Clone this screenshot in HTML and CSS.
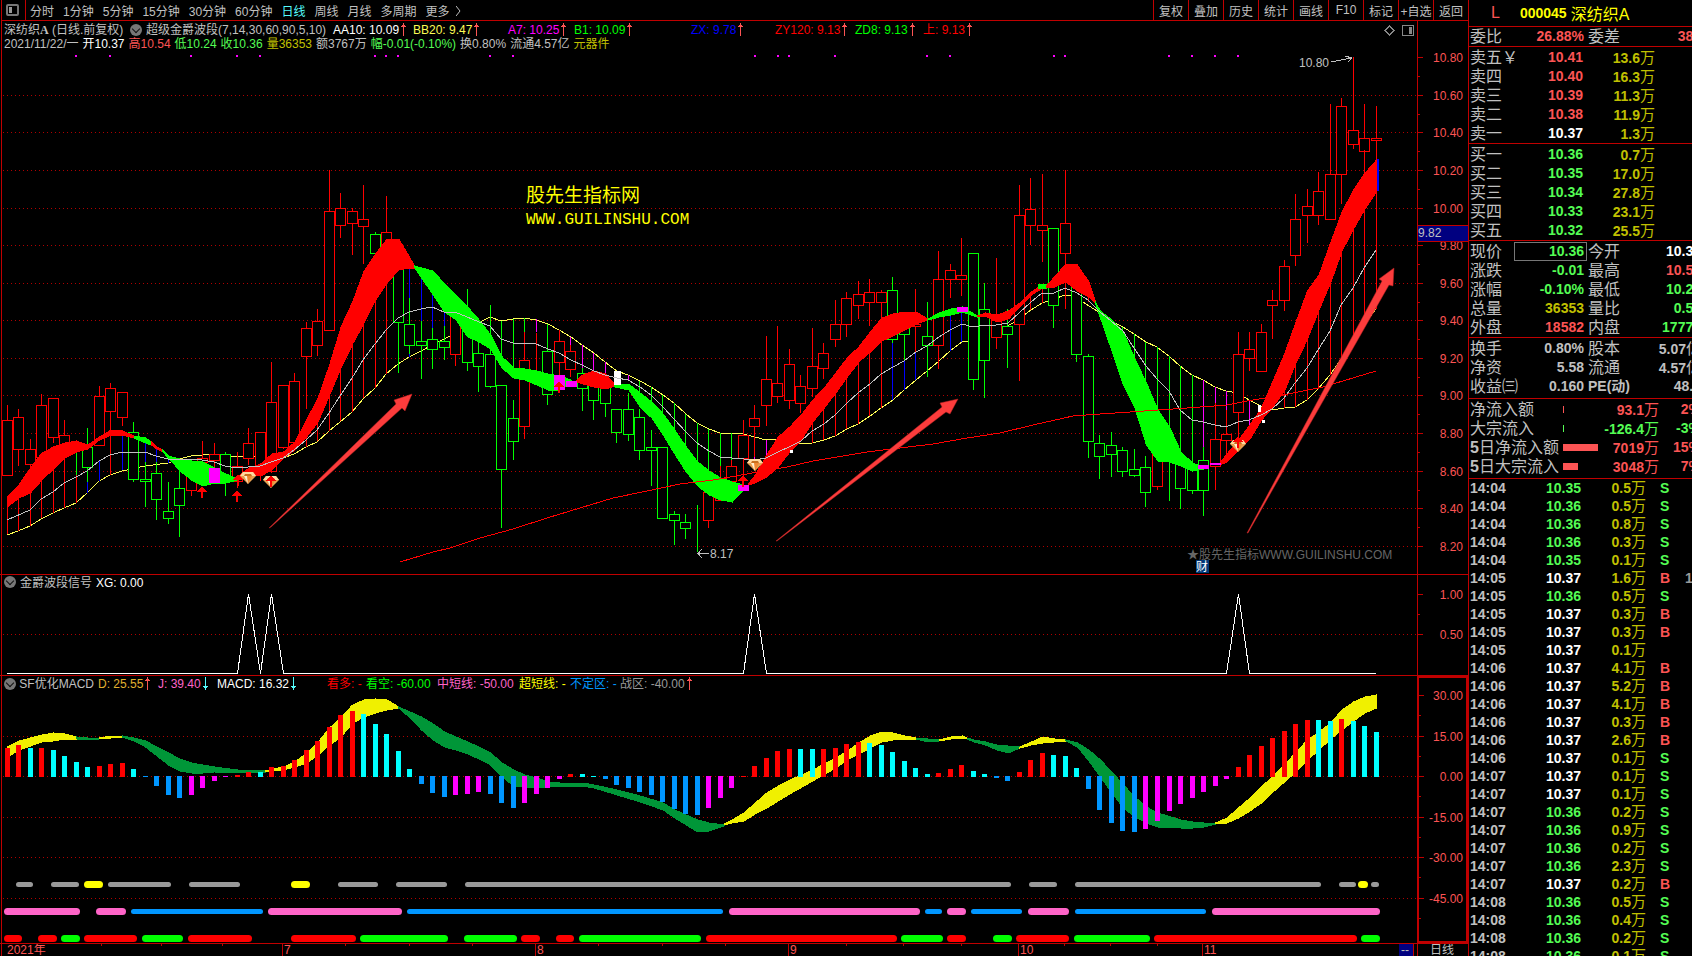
FILE: index.html
```html
<!DOCTYPE html>
<html lang="zh-CN">
<head>
    <meta charset="UTF-8">
    <meta name="viewport" content="width=device-width, initial-scale=1.0">
    <title>深纺织A 000045 日线</title>
    <link rel="stylesheet" href="styles.css">
</head>
<body>
    <main class="left">
        <nav class="toolbar">
            <button class="side-btn" aria-label="侧栏">
                <svg width="13" height="12" viewBox="0 0 13 12"><rect x="1" y="1" width="11" height="10" rx="1" fill="none" stroke="#777" stroke-width="2"/><rect x="3" y="3" width="3" height="6" fill="#999"/></svg>
            </button>
            <div class="periods">
                <button>分时</button>
                <button>1分钟</button>
                <button>5分钟</button>
                <button>15分钟</button>
                <button>30分钟</button>
                <button>60分钟</button>
                <button class="active">日线</button>
                <button>周线</button>
                <button>月线</button>
                <button>多周期</button>
                <button>更多<svg class="more" width="5" height="10" viewBox="0 0 5 10"><path d="M0 0L4 5L0 10" fill="none" stroke="#c0c0c0"/></svg></button>
            </div>
            <div class="tools">
                <button>复权</button>
                <button>叠加</button>
                <button>历史</button>
                <button>统计</button>
                <button>画线</button>
                <button>F10</button>
                <button>标记</button>
                <button>+自选</button>
                <button>返回</button>
            </div>
        </nav>

        <section class="panel">
            <div class="legend legend-main">
                <span>深纺织<b class="mark">A</b> (日线.前复权) <i class="fold"></i> 超级金爵波段(7,14,30,60,90,5,10)</span>
                <span class="white">AA10: 10.09<i class="up"></i></span>
                <span class="lemon">BB20: 9.47<i class="up"></i></span>
                <span class="magenta">A7: 10.25<i class="up"></i></span>
                <span class="lime">B1: 10.09<i class="up"></i></span>
                <span class="blue">ZX: 9.78<i class="up"></i></span>
                <span class="pure-red">ZY120: 9.13<i class="up"></i></span>
                <span class="lime">ZD8: 9.13<i class="up"></i></span>
                <span class="pure-red">上: 9.13<i class="up"></i></span>
            </div>
            <div class="legend legend-day">
                <span>2021/11/22/一</span>
                <span class="white">开10.37</span>
                <span class="red">高10.54</span>
                <span class="green">低10.24</span>
                <span class="green">收10.36</span>
                <span class="olive">量36353</span>
                <span>额3767万</span>
                <span class="green">幅-0.01(-0.10%)</span>
                <span>换0.80%</span>
                <span>流通4.57亿</span>
                <span class="olive">元器件</span>
            </div>
            <svg id="price" viewBox="0 21 1468 553"></svg>
        </section>

        <section class="panel">
            <div class="legend legend-signal">
                <i class="fold"></i>
                <span>金爵波段信号</span>
                <span class="white">XG: 0.00</span>
            </div>
            <svg id="signal" viewBox="0 575 1468 100"></svg>
        </section>

        <section class="panel">
            <div class="legend legend-macd">
                <span><i class="fold"></i> SF优化MACD</span>
                <span class="gold">D: 25.55<i class="up"></i></span>
                <span class="pink">J: 39.40<i class="down"></i></span>
                <span class="white">MACD: 16.32<i class="down"></i></span>
                <span class="pure-red">看多: -</span>
                <span class="lime">看空: -60.00</span>
                <span class="pink">中短线: -50.00</span>
                <span class="yellow">超短线: -</span>
                <span class="azure">不定区: -</span>
                <span class="gray">战区: -40.00<i class="up"></i></span>
            </div>
            <svg id="macd" viewBox="0 676 1468 267"></svg>
        </section>

        <svg id="dates" viewBox="0 944 1468 12"></svg>
    </main>

    <aside class="right">
        <header class="stock"><span class="red">L</span><b>000045</b><span>深纺织A</span></header>
        <table class="quote first">
            <tr><th>委比</th><td class="red">26.88%</td><th>委差</th><td class="red">384</td></tr>
        </table>
        <table class="book">
            <tr><th>卖五￥</th><td class="red">10.41</td><td>13.6<i>万</i></td></tr>
            <tr><th>卖四</th><td class="red">10.40</td><td>16.3<i>万</i></td></tr>
            <tr><th>卖三</th><td class="red">10.39</td><td>11.3<i>万</i></td></tr>
            <tr><th>卖二</th><td class="red">10.38</td><td>11.9<i>万</i></td></tr>
            <tr><th>卖一</th><td class="white">10.37</td><td>1.3<i>万</i></td></tr>
        </table>
        <table class="book">
            <tr><th>买一</th><td class="green">10.36</td><td>0.7<i>万</i></td></tr>
            <tr><th>买二</th><td class="green">10.35</td><td>17.0<i>万</i></td></tr>
            <tr><th>买三</th><td class="green">10.34</td><td>27.8<i>万</i></td></tr>
            <tr><th>买四</th><td class="green">10.33</td><td>23.1<i>万</i></td></tr>
            <tr><th>买五</th><td class="green">10.32</td><td>25.5<i>万</i></td></tr>
        </table>
        <table class="quote">
            <tr><th>现价</th><td class="green now">10.36</td><th>今开</th><td class="white">10.37</td></tr>
            <tr><th>涨跌</th><td class="green">-0.01</td><th>最高</th><td class="red">10.54</td></tr>
            <tr><th>涨幅</th><td class="green">-0.10%</td><th>最低</th><td class="green">10.24</td></tr>
            <tr><th>总量</th><td class="olive">36353</td><th>量比</th><td class="green">0.50</td></tr>
            <tr><th>外盘</th><td class="red">18582</td><th>内盘</th><td class="green">17771</td></tr>
        </table>
        <table class="quote short">
            <tr><th>换手</th><td>0.80%</td><th>股本</th><td>5.07<i>亿</i></td></tr>
            <tr><th>净资</th><td>5.58</td><th>流通</th><td>4.57<i>亿</i></td></tr>
            <tr><th>收益㈢</th><td>0.160</td><th class="pe">PE(动)</th><td>48.6</td></tr>
        </table>
        <table class="flow short">
            <tr class="red"><th>净流入额</th><td><span class="bar" style="width:1px"></span></td><td>93.1<i>万</i></td><td>2%</td></tr>
            <tr class="green"><th>大宗流入</th><td><span class="bar" style="width:1px"></span></td><td>-126.4<i>万</i></td><td>-3%</td></tr>
            <tr class="red"><th><b>5</b>日净流入额</th><td><span class="bar" style="width:35px"></span></td><td>7019<i>万</i></td><td>15%</td></tr>
            <tr class="red"><th><b>5</b>日大宗流入</th><td><span class="bar" style="width:15px"></span></td><td>3048<i>万</i></td><td>7%</td></tr>
        </table>
        <table class="ticks" id="ticks"></table>
    </aside>

    <script src="chart.js"></script>
</body>
</html>
```
FILE: styles.css
```css
* {
    box-sizing: border-box;
}
body {
    margin: 0;
    height: 100vh;
    overflow: hidden;
    display: grid;
    grid-template-columns: 1fr 224px;
    background: #000;
    color: #c0c0c0;
    font: 12px "Liberation Sans", "Noto Sans CJK SC", sans-serif;
}
button {
    padding: 0;
    border: 0;
    background: none;
    color: inherit;
    font: inherit;
    white-space: nowrap;
}
i {
    font-style: normal;
}
svg {
    display: block;
}
.left {
    min-width: 0;
}

/* toolbar */
.toolbar {
    display: flex;
    height: 21px;
    margin-left: 1px;
    border-left: 1px solid #c00000;
    border-bottom: 1px solid #c00000;
}
.side-btn {
    width: 24px;
    padding-left: 4px;
    border-right: 1px solid #c00000;
}
.periods {
    display: flex;
    gap: 9px;
    padding-left: 4px;
}
.periods .active {
    color: #54fcfc;
}
.more {
    display: inline-block;
    margin-left: 6px;
}
.tools {
    display: flex;
    margin-left: auto;
}
.tools button {
    width: 35px;
    border-left: 1px solid #c00000;
}

/* chart panels */
.panel {
    position: relative;
    border-bottom: 1px solid #c00000;
}
.panel > svg, #dates {
    width: 100%;
    height: auto;
}
.legend {
    position: absolute;
    left: 4px;
    line-height: 14px;
    white-space: nowrap;
}
.legend-main {
    top: 2px;
    display: grid;
    grid-template-columns: 329px 80px 95px 66px 117px 84px 80px 68px 68px;
}
.legend-main .fold {
    margin: 0 1px 0 3px;
}
.legend-day {
    top: 16px;
    display: flex;
    gap: 4px;
}
.legend-signal {
    top: 1px;
    display: flex;
    gap: 4px;
}
.legend-macd {
    top: 1px;
    display: grid;
    grid-template-columns: 94px 60px 59px 110px 39px 71px 82px 51px 50px 80px;
}
.mark {
    font-family: "Liberation Serif", serif;
}
.fold {
    display: inline-block;
    width: 12px;
    height: 12px;
    border-radius: 6px;
    background: #777;
    vertical-align: -2px;
}
.fold::after {
    content: "";
    display: block;
    width: 5px;
    height: 5px;
    margin: 2px auto;
    border: solid #111;
    border-width: 0 1px 1px 0;
    transform: rotate(45deg);
}
.up, .down {
    display: inline-block;
    width: 5px;
    height: 13px;
    margin-left: 2px;
    vertical-align: -2px;
    background: linear-gradient(#fc5454, #fc5454) 2px 0 / 1px 13px no-repeat, linear-gradient(#fc5454, #fc5454) 1px 2px / 3px 1px no-repeat, linear-gradient(#fc5454, #fc5454) 0 3px / 5px 1px no-repeat;
}
.down {
    background: linear-gradient(#54fcfc, #54fcfc) 2px 0 / 1px 13px no-repeat, linear-gradient(#54fcfc, #54fcfc) 1px 10px / 3px 1px no-repeat, linear-gradient(#54fcfc, #54fcfc) 0 9px / 5px 1px no-repeat;
}

/* colours */
.white { color: #fff; }
.red { color: #fc5454; }
.pure-red { color: #f00; }
.green { color: #54fc54; }
.lime { color: #0f0; }
.olive { color: #c0c000; }
.lemon { color: #fcfc54; }
.yellow { color: #ff0; }
.magenta { color: #f0f; }
.blue { color: #00f; }
.azure { color: #0096ff; }
.pink { color: #ff64c8; }
.gold { color: #e0b030; }
.gray { color: #999; }

/* svg text */
.axis {
    fill: #fc5454;
    text-anchor: end;
}
.date {
    fill: #fc5454;
}
.note {
    fill: #c0c0c0;
}
.brand {
    fill: #ff0;
    font-size: 19px;
}
.brand-url {
    fill: #ff0;
    font: 16px "Liberation Mono", monospace;
}
.faint {
    fill: #666;
}
.badge {
    fill: #fff;
}

/* quote column */
.right {
    overflow: hidden;
    border-left: 1px solid #c00000;
    font-size: 14px;
}
.stock {
    display: flex;
    align-items: center;
    height: 26px;
    padding-left: 22px;
    color: #ff0;
    font-size: 16px;
}
.stock b {
    margin: 0 4px 0 20px;
    font-size: 14px;
}
table {
    width: 232px;
    table-layout: fixed;
    border-collapse: separate;
    border-spacing: 0;
    border-top: 1px solid #c00000;
    padding: 1px 0 0;
}
tr {
    height: 19px;
}
th, td {
    padding: 0;
    line-height: 17px;
    white-space: nowrap;
}
th {
    padding-left: 1px;
    font-size: 16px;
    font-weight: normal;
    text-align: left;
    color: #c0c0c0;
}
td {
    font-weight: bold;
    text-align: right;
}
td i {
    font-size: 15px;
    font-weight: normal;
}
.first {
    padding: 0;
}
.short {
    padding-bottom: 2px;
}
.book {
    color: #c0c000;
}
.book th {
    width: 46px;
}
.book td:nth-child(2) {
    width: 68px;
}
.book td:nth-child(3) {
    padding-right: 46px;
}
.quote th:first-child {
    width: 45px;
}
.quote td:nth-child(2) {
    width: 73px;
    padding-right: 3px;
}
.quote .now {
    box-shadow: inset 0 0 0 1px #777;
}
.quote .pe {
    font-size: 14px;
    font-weight: bold;
}
.flow th {
    width: 94px;
}
.flow td:nth-child(2) {
    width: 36px;
    text-align: left;
}
.flow td:nth-child(3) {
    width: 60px;
}
.bar {
    display: block;
    height: 7px;
    background: currentColor;
}
.ticks {
    padding: 0;
}
.ticks tr {
    height: 18px;
}
.ticks td:nth-child(1) {
    width: 45px;
    padding-left: 1px;
    text-align: left;
}
.ticks td:nth-child(2) {
    width: 67px;
}
.ticks td:nth-child(3) {
    width: 65px;
}
.ticks td:nth-child(4) {
    width: 39px;
    padding-left: 14px;
    text-align: left;
}
.ticks td:nth-child(5) {
    text-align: left;
}
```
FILE: chart.js
```js
const RED = '#f00', GREEN = '#0f0', MAGENTA = '#f0f', BLUE = '#00f', LINE = '#c00000';
const x = i => 7.5 + Math.floor(i * 11.505);

// high, body top, body bottom, low, one row per day; g = green candle
const candles = `405 420 475 475 r|409 417 449 466 r|439 449 464 468 r|394 405 457 457 r|398 398 437 443 r|420 435 445 445 r|452 462 462 475 g|428 447 467 482 g|386 396 445 445 r|383 388 411 430 r|392 392 417 426 r|422 432 479 482 g|462 479 481 507 g|462 473 499 520 g|482 511 518 524 g|470 488 505 537 g|465 465 490 496 r|441 458 462 470 r|443 454 460 468 r|452 454 480 496 g|452 466 481 488 r|428 443 458 465 r|432 432 467 481 r|362 402 471 473 r|385 385 447 449 r|373 381 442 442 r|322 328 356 409 r|309 321 345 356 r|170 211 330 330 r|193 208 225 238 r|208 211 223 255 r|185 219 226 264 r|232 234 253 253 g|196 232 250 250 r|269 269 322 373 g|298 324 345 354 g|321 341 345 379 g|328 339 349 369 g|326 341 347 360 g|313 313 354 366 r|289 320 362 371 g|340 353 366 392 g|305 354 386 388 g|385 385 469 528 g|400 418 441 460 g|332 360 426 439 r|333 354 354 370 r|351 351 394 405 g|330 341 362 377 r|345 351 369 377 r|368 373 388 411 g|380 380 400 420 g|380 380 403 417 g|409 409 432 443 g|393 409 434 441 g|409 417 450 460 g|430 447 450 486 g|447 447 518 518 g|511 514 520 545 g|514 522 528 539 g|505 528 528 552 g|492 492 520 528 r|466 478 500 500 r|460 466 481 481 r|420 435 458 487 r|405 418 426 457 r|336 379 405 426 r|326 383 396 403 r|349 364 400 409 r|375 386 403 413 r|328 366 388 397 r|343 353 368 379 r|300 324 339 347 r|292 298 324 337 r|281 294 305 319 r|279 292 302 326 r|290 292 302 320 r|277 290 339 343 g|313 313 334 361 g|289 324 326 353 r|302 336 345 377 g|251 279 345 369 r|264 270 279 298 r|238 275 279 296 r|253 253 379 390 g|283 309 360 398 g|258 320 337 349 r|309 326 334 368 g|185 215 324 381 r|178 209 225 245 r|174 225 230 262 r|228 228 305 328 g|170 223 253 309 r|264 283 354 362 g|354 356 441 458 g|435 443 456 479 g|432 445 454 477 g|447 450 471 477 g|449 469 475 477 g|456 467 492 507 g|449 449 486 490 r|462 462 462 501 g|464 464 488 509 g|467 467 490 494 g|447 460 490 516 g|403 439 466 490 r|410 434 440 456 r|332 354 412 442 r|332 349 358 371 r|324 332 371 371 r|290 300 305 339 r|260 266 300 311 r|194 219 255 266 r|189 206 215 243 r|172 191 215 225 r|104 174 219 219 r|98 106 174 204 r|57 130 144 149 r|104 138 151 180 r|106 138 140 160 r`;

// wave ribbon: colour, then index,top,bottom
const wave = [
    ['r', '0,497,507 1,485,498 2,468,493 3,453,480 4,447,469 5,443,458 6,441,452 7,445,449 8,437,440 9,430,435 10,431,435 11,436,438'],
    ['g', '11,436,438 12,438,443 12.5,442,445'],
    ['r', '12.5,442,445 13,447,449 13.5,450,452'],
    ['g', '13.5,450,452 14,456,458 15,459,471 16,461,480 17,462,486 18,468,483 19,474,483 20,479,480'],
    ['r', '20,477,480 21,468,475 22,464,476 23,454,470 24,452,458 25,442,450 26,420,437 27,398,422 28,365,395 29,327,368 30,302,344 31,271,323 32,254,300 33,239,283 34,239,270 35,258,268 35.4,267,268'],
    ['g', '35.4,266,268 36,268,278 37,271,295 38,284,312 39,295,320 40,307,337 41,320,342 42,335,349 43,357,368 44,368,378 45,369,380 46,371,385 47,374,390 48,376,390 49,380,382'],
    ['r', '49.5,380,382 50,375,384 51,371,387 52,374,389 52.8,385,386'],
    ['g', '52.8,385,387 54,384,390 55,393,407 56,402,418 57,414,435 58,430,454 59,447,472 60,462,486 61,471,495 62,478,500 63,482,502 64,485,490'],
    ['r', '64.4,484,485 65,475,483 66,455,477 67,437,467 68,427,452 69,415,440 70,400,422 71,388,408 72,373,393 73,358,377 74,347,362 75,332,352 76,318,341 77,314,336 78,312,330 79,312,324 80,319,320'],
    ['g', '80,319,320 81,313,317 82,309,315 83,307,312 84.3,316,317'],
    ['r', '84.3,316,317 85,313,316 86,315,322 87,311,319 88,303,307 89,292,295 90,284,288'],
    ['g', '89.6,284,288 90.3,284,288'],
    ['r', '90.3,286,287 91,277,287 92,264,282 93,265,291 94,282,297 94.6,303,304'],
    ['g', '94.6,303,304 95,311,318 96,320,351 97,332,385 98,359,408 99,383,445 100,410,461 101,427,462 102,452,466 103,463,471 104,467,469'],
    ['r', '105.4,463,465 106,454,462 107,440,450 108,425,439 109,408,420 110,381,407 111,354,391 112,322,363 113,291,339 114,275,310 115,243,283 116,212,251 117,190,229 118,173,209 119,160,192']
];

// thin lines, x,y in plot units
const yellowLines = [
    '7,535 18,531 30,526 41,519 53,513 64,508 76,503 87,493 99,481 110,475 122,471 145,466 168,463 179,459 191,456 203,455 214,454 225,455 237,457 255,456',
    '283,458 294,454 306,447 317,442 329,431 340,422 352,412 363,399 375,388 386,374 398,364 409,357 421,351 432,345 450,336',
    '480,322 490,317 501,321 513,319 524,318 536,320 548,324 559,330 571,337 582,345 594,353 605,362 617,371 628,375 640,381 651,387 663,395 674,403 686,414 697,423 709,429 720,433 732,433 743,434 755,437 766,440 778,439',
    '797,443 812,443 824,440 835,436 847,429 858,424 870,416 881,408 893,400 904,390 916,380 927,371 939,361 950,351 962,342 968,341',
    '1002,329 1013,323 1031,310 1042,303 1054,299 1065,295 1072,296',
    '1083,302 1100,313 1111,321 1123,327 1134,334 1146,342 1157,347 1169,356 1180,366 1192,375 1203,380 1215,387 1226,391 1238,393 1249,400 1261,406 1272,410 1284,408 1295,407 1307,400 1318,389 1330,375 1341,359 1353,341 1364,325 1376,309'
];
const grayLine = '7,520 30,510 41,499 53,492 64,483 76,477 87,471 99,461 110,455 122,452 145,452 156,456 168,459 191,459 202,460 214,462 225,466 237,468 260,466 271,462 283,458 294,450 306,440 317,430 329,413 340,396 352,378 363,360 375,344 386,330 398,318 409,312 421,309 432,307 444,312 455,312 467,317 479,322 490,326 501,339 513,343 536,344 548,349 559,353 571,360 582,365 594,371 605,375 617,378 628,380 640,387 651,395 663,407 674,419 686,432 697,443 709,451 720,457 732,458 755,460 766,458 778,452 789,447 801,441 812,431 824,424 835,415 847,403 858,393 870,384 881,374 893,367 904,361 916,352 927,346 939,337 950,330 962,324 973,327 985,325 996,325 1008,323 1019,313 1031,302 1042,293 1054,293 1065,288 1077,293 1088,300 1100,312 1111,321 1123,331 1134,348 1146,366 1157,379 1169,391 1180,410 1192,420 1203,422 1215,425 1226,427 1238,422 1249,420 1261,415 1272,409 1284,398 1295,383 1307,368 1318,350 1330,331 1341,305 1353,288 1364,268 1376,250';
const longLine = '400,562 433,552 450,548 480,538 513,529 547,518 580,508 613,498 647,491 680,484 713,480 747,474 763,471 787,467 813,461 867,452 900,448 933,444 967,438 1000,433 1033,425 1073,416 1100,414 1130,412 1187,408 1227,405 1247,401 1283,395 1323,387 1376,371';

// stems between ribbon and yellow line: index,y1,y2,colour
const stems = '0,507,534,r 1,498,531,r 2,493,526,r 3,480,518,r 4,469,513,r 5,458,508,r 6,475,503,r 7,482,493,b 8,460,481,b 9,435,475,r 10,435,470,b 12,443,462,b 13,449,462,b 14,458,463,b 26,437,447,r 27,422,441,r 28,395,431,r 29,368,421,r 30,344,412,r 31,323,398,r 32,300,388,r 33,283,374,r 35,268,298,b 35,354,357,b 36,278,321,b 37,295,328,b 38,312,326,b 43,321,357,g 44,319,368,g 45,318,332,g 46,319,332,m 47,324,351,g 49,337,345,m 50,345,368,m 51,353,371,m 52,362,374,m 54,375,380,m 55,381,393,g 56,387,402,g 57,395,414,g 58,403,430,g 59,414,447,g 60,423,462,g 61,429,471,g 62,433,466,g 63,433,460,g 65,457,460,m 66,440,456,m 70,422,443,r 71,408,440,r 72,393,436,r 73,377,429,r 74,362,424,r 75,352,416,r 76,341,408,r 77,343,400,b 78,361,390,b 79,353,380,b 82,315,351,b 83,312,342,b 89,295,310,r 90,288,303,r 94,297,302,r 97,327,332,g 98,334,359,g 99,342,383,g 100,347,410,g 101,356,427,g 102,366,452,g 103,375,463,g 104,380,447,m 105,387,403,m 106,391,410,m 107,440,444,m 108,400,425,m 111,391,408,r 112,363,407,r 113,339,400,r 114,310,389,r 115,283,375,r 116,251,359,r 117,229,341,r 118,150,325,r 119,140,309,r';
const dots = [76, 110, 191, 237, 260, 375, 386, 398, 490, 513, 755, 778, 789, 835, 927, 950, 1054, 1065, 1169, 1192, 1215, 1238];
const colours = { r: RED, g: GREEN, b: BLUE, m: MAGENTA };

const el = (tag, attrs, text) => {
    const a = Object.entries(attrs).map(([k, v]) => `${k}="${v}"`).join(' ');
    return `<${tag} ${a}>${text || ''}</${tag}>`;
};
const vline = (px, y1, y2, c) => el('path', { d: `M${px} ${y1}V${y2}`, stroke: c });
const hline = (x1, x2, y, c) => el('path', { d: `M${x1} ${y}H${x2}`, stroke: c });
const rect = (px, y, w, h, c) => el('rect', { x: px, y: y, width: w, height: h, fill: c });
const poly = (points, c) => el('polyline', { points: points, fill: 'none', stroke: c });
const text = (px, y, cls, t) => el('text', { x: px, y: y, class: cls }, t);
const grid = y => el('path', { d: `M3 ${y}H1417`, stroke: '#b00000', 'stroke-dasharray': '1 3' });
const frame = (y1, y2) => vline(1.5, y1, y2, LINE) + vline(1417.5, y1, y2, LINE);

function ribbon(data, fill) {
    const p = data.split(' ').map(s => s.split(',').map(Number));
    const px = i => 7.5 + i * 11.505;
    const top = p.map(q => `${px(q[0])},${q[1]}`);
    const low = p.map(q => `${px(q[0])},${q[2]}`).reverse();
    return el('polygon', { points: top.concat(low).join(' '), fill: fill, stroke: fill });
}

function upArrow(px, y) {
    return el('path', { d: `M${px} ${y}l5 6h-4v6h-2v-6h-4z`, fill: RED });
}

function diamond(px, y) {
    return `<g transform="translate(${px} ${y})" shape-rendering="auto">
        <path d="M-5 -6H5L8 -2L0 6L-8 -2Z" fill="#e8a050"/>
        <path d="M-5 -6H5L8 -2H-8Z" fill="#ffd8a0"/>
        <path d="M-3 -4H3L4 -2H-4Z" fill="#c87020"/>
        <path d="M-4 -2H4L0 6Z" fill="#f08830"/>
        <path d="M-4 -2L0 6L-1 -2Z" fill="#fff0d0"/></g>`;
}

function drawPrice() {
    let s = frame(21, 574);
    for (let k = 0; k < 14; k++) {
        const y = Math.floor(57.7 + k * 37.58);
        const p = (10.8 - k * 0.2).toFixed(2);
        if (k) s += grid(y + 0.5);
        s += hline(1417, 1423, y + 0.5, LINE) + text(1463, y + 5, 'axis', p);
        if (y < 540) s += hline(1417, 1420, y + 19.5, LINE);
    }
    s += rect(1418, 225, 50, 17, '#000080') + hline(1417, 1468, 225.5, LINE) + hline(1417, 1468, 241.5, LINE);
    s += text(1418, 237, 'note', '9.82');
    dots.forEach(d => { s += rect(d - 1, 55, 2, 2, MAGENTA); });

    s += yellowLines.map(l => poly(l, '#fcfc54')).join('');
    candles.split('|').forEach((row, i) => {
        const [high, top, bottom, low, c] = row.split(' ');
        const col = colours[c];
        s += vline(x(i), high, top, col) + vline(x(i), bottom, low, col);
        s += el('rect', { x: x(i) - 5, y: +top + 0.5, width: 10, height: bottom - top, fill: '#000', stroke: col });
    });
    stems.split(' ').forEach(t => {
        const [i, a, b, c] = t.split(',');
        s += vline(x(+i), a, b, colours[c]);
    });
    wave.forEach(w => { s += ribbon(w[1], colours[w[0]]); });
    s += rect(209, 468, 11, 15, MAGENTA) + rect(554, 375, 11, 15, MAGENTA) + rect(566, 381, 11, 6, MAGENTA);
    s += rect(738, 485, 11, 6, MAGENTA) + rect(957, 307, 11, 5, MAGENTA) + rect(1198, 465, 11, 4, MAGENTA) + rect(1210, 463, 11, 2, MAGENTA);
    s += rect(614, 371, 7, 14, '#fff') + rect(1258, 405, 3, 7, '#fff') + rect(1262, 420, 3, 3, '#fff') + rect(790, 450, 3, 3, '#fff');
    s += rect(1377, 159, 2, 32, BLUE);
    s += poly(grayLine, '#c0c0c0') + poly(longLine, RED);

    s += diamond(248, 478) + diamond(271, 482) + diamond(755, 465) + diamond(1238, 446);
    s += upArrow(202, 486) + upArrow(237, 490) + upArrow(238, 474) + upArrow(271, 475) + upArrow(559, 381) + upArrow(743, 475) + upArrow(1238, 436);

    s += `<g fill="#fc3c3c" stroke="#b02020" stroke-width="0.5" shape-rendering="auto">
        <polygon points="269,528 396,404 394,400 412,394 405,411 402,408 271,527"/>
        <polygon points="776,541 942,407 940,403 958,399 950,414 946,412 777,541"/>
        <polygon points="1247,533 1382,281 1379,279 1394,268 1393,286 1389,285 1248,533"/></g>`;

    s += text(1299, 67, 'note', '10.80') + text(710, 558, 'note', '8.17');
    s += '<g fill="none" stroke="#c0c0c0"><path d="M1331 62L1351 58M1345 56L1352 58L1348 62"/><path d="M709 553.500H698M702 549L698 553.500L702 558"/></g>';
    s += text(526, 202, 'brand', '股先生指标网') + text(526, 224, 'brand-url', 'WWW.GUILINSHU.COM');
    s += text(1187, 559, 'faint', '★股先生指标WWW.GUILINSHU.COM');
    s += rect(1196, 560, 13, 13, '#003878') + text(1196, 571, 'badge', '财');
    s += '<g fill="none" stroke="#888"><path d="M1389.500 26L1394 30.500L1389.500 35L1385 30.500Z"/><rect x="1402.500" y="25.500" width="11" height="10" rx="1"/></g>' + rect(1409, 27, 3, 7, '#888');
    document.getElementById('price').innerHTML = `<g shape-rendering="crispEdges">${s}</g>`;
}

function drawSignal() {
    let s = frame(575, 675) + grid(634.5);
    s += hline(1417, 1423, 594.5, LINE) + hline(1417, 1423, 634.5, LINE) + hline(1417, 1420, 614.5, LINE);
    s += text(1463, 599, 'axis', '1.00') + text(1463, 639, 'axis', '0.50');
    let line = `7,673.5 `;
    [21, 23, 65, 107].forEach(i => {
        line += `${x(i - 1)},673.5 ${x(i)},594 ${x(i + 1)},673.5 `;
    });
    s += poly(line + '1376,673.5', '#fff');
    document.getElementById('signal').innerHTML = `<g shape-rendering="crispEdges">${s}</g>`;
}

const bars = 'r748 r745 c748 r748 c750 c756 c762 c767 r766 r764 r763 c769 b778 b787 b796 b799 m796 m789 m782 m778 r775 r772 c772 r767 r766 r760 r750 r741 r727 r715 r711 c714 c724 c734 c751 c769 b785 b794 b798 m796 m795 m793 b795 b804 b809 m804 m795 m789 m780 r774 c774 c776 b780 b786 b789 b793 b796 b803 b810 b815 b816 m809 m799 m789 r776 r766 r758 r751 r749 c749 c749 r749 r748 r744 r742 c743 c745 c752 c761 c768 c774 r773 r769 r765 c771 c774 b779 b782 r772 r760 r753 c755 c756 c768 b790 b811 b824 b832 b833 m830 m822 m812 m805 m799 m793 m787 m780 r767 r755 r746 r738 r731 r724 r720 c720 c721 r719 c721 c726 c732';
const barColours = { r: RED, c: '#0ff', b: '#0096ff', m: MAGENTA };
const trend = [
    ['y', '0,747,757 1,741,750 2,738,746 3,735,742 4,733,741 5,734,739 6,737,739'],
    ['g', '6,737,739 7,738,740 8,738,739'],
    ['y', '8,738,739 9,736,738 10,736,737'],
    ['g', '10,736,737 11,738,741 12,741,747 13,747,756 14,753,765 15,759,771 16,763,773 17,765,773 18,767,772 20,770,772 21,770,772 22.4,771,772'],
    ['y', '22.4,771,772 23,769,771 24,767,770 25,762,767 26,753,763 27,742,755 28,728,745 29,717,737 30,705,723 31,700,717 32,699,713 33,700,710 34,707,708'],
    ['g', '34,707,708 35,712,718 36,717,730 37,724,740 38,732,747 39,737,750 40,742,754 41,747,759 42,753,765 43,763,777 44,770,786 45,775,787 46,778,788 47,782,787 48,783,786 50,783,786 51,785,788 53,790,795 55,796,802 57,803,810 58,810,818 59,815,825 60,820,832 61,823,831 62.3,825,826'],
    ['y', '62.3,824,825 63,820,823 64,813,821 65,803,814 66,793,808 67,786,801 68,780,794 70,770,781 72,758,768 73,751,760 74,743,754 75,736,748 76,732,742 77,733,740 78,736,739 79,738,739'],
    ['g', '79,738,739 80,739,742 81,740,741'],
    ['y', '81,740,741 82,737,739 83,736,738 83.4,738,739'],
    ['g', '83.4,738,739 84,740,742 85,742,745 86,745,750 87,746,753 88,747,748'],
    ['y', '88,747,748 89,742,745 90,737,743 91,739,742 92,739,741'],
    ['g', '92,740,741 93,743,747 94,750,761 95,760,777 96,772,793 97,785,808 98,797,817 99,807,823 100,813,827 102,820,828 103,822,828 104,823,827 105,823,824'],
    ['y', '105,823,824 106,818,823 107,808,818 108,798,811 109,787,803 110,776,792 111,765,782 112,752,772 113,740,760 114,732,750 115,723,739 116,710,730 117,702,721 118,697,713 119,695,708']
];
// state strips: y, thickness, colour, x ranges
const strips = [
    [884, 5, '#999', '16-33 51-79 108-171 189-240 338-378 396-447 465-1011 1029-1057 1075-1321 1339-1356 1371-1379'],
    [884, 7, '#ff0', '84-103 291-310 1358-1368'],
    [911, 7, '#ff64c8', '4-80 96-126 268-402 729-920 947-966 1028-1069 1212-1380'],
    [911, 5, '#0096ff', '131-263 407-723 925-942 971-1022 1075-1206'],
    [938, 7, RED, '4-22 38-57 84-137 188-252 291-356 521-540 556-574 706-897 947-966 1016-1069 1154-1357'],
    [938, 7, GREEN, '61-80 142-183 360-448 464-517 579-701 901-943 993-1012 1074-1150 1361-1380']
];

function drawMacd() {
    let s = frame(676, 943);
    [30, 15, 0, -15, -30, -45].forEach((v, k) => {
        const y = Math.round(695 + k * 40.6);
        if (k) s += grid(y + 0.5);
        s += hline(1418, 1424, y + 0.5, LINE) + hline(1418, 1421, y + 20.5, LINE) + text(1463, y + 5, 'axis', v.toFixed(2));
    });
    s += el('rect', { x: 1418, y: 677, width: 49, height: 265, fill: 'none', stroke: LINE, 'stroke-width': 2 });
    trend.forEach(t => { s += ribbon(t[1], t[0] === 'y' ? '#f0f000' : '#009638'); });
    bars.split(' ').forEach((b, i) => {
        const y = +b.slice(1);
        s += rect(x(i) - 2.5, Math.min(y, 776), 5, Math.max(1, Math.abs(777 - y)), barColours[b[0]]);
    });
    strips.forEach(([y, w, c, ranges]) => {
        ranges.split(' ').forEach(r => {
            const [a, b] = r.split('-').map(Number);
            s += el('rect', { x: a, y: y - (w - 1) / 2, width: b - a, height: w, rx: w / 2, fill: c, 'shape-rendering': 'auto' });
        });
    });
    document.getElementById('macd').innerHTML = `<g shape-rendering="crispEdges">${s}</g>`;
}

function drawDates() {
    let s = frame(944, 956) + text(7, 954, 'date', '2021年');
    [[282, '7'], [535, '8'], [788, '9'], [1018, '10'], [1202, '11']].forEach(([px, t]) => {
        s += vline(px + 0.5, 944, 956, LINE) + text(px + 2, 954, 'date', t);
    });
    [101, 161, 222, 345, 409, 472, 598, 662, 725, 846, 903, 961, 1064, 1110, 1157].forEach(px => {
        s += vline(px + 0.5, 944, 946, LINE);
    });
    s += rect(1399, 944, 14, 12, '#000080') + vline(1413.5, 944, 956, LINE) + text(1401, 954, 'note', '--');
    s += text(1430, 954, 'note', '日线');
    document.getElementById('dates').innerHTML = `<g shape-rendering="crispEdges">${s}</g>`;
}

const ticks = [
    ['14:04', 35, 0.5, 'S'], ['14:04', 36, 0.5, 'S'], ['14:04', 36, 0.8, 'S'], ['14:04', 36, 0.3, 'S'], ['14:04', 35, 0.1, 'S'],
    ['14:05', 37, 1.6, 'B', '1'], ['14:05', 36, 0.5, 'S'], ['14:05', 37, 0.3, 'B'], ['14:05', 37, 0.3, 'B'], ['14:05', 37, 0.1, ''],
    ['14:06', 37, 4.1, 'B'], ['14:06', 37, 5.2, 'B'], ['14:06', 37, 4.1, 'B'], ['14:06', 37, 0.3, 'B'], ['14:06', 37, 2.6, 'B'], ['14:06', 37, 0.1, 'S'],
    ['14:07', 37, 0.1, 'S'], ['14:07', 37, 0.1, 'S'], ['14:07', 36, 0.2, 'S'], ['14:07', 36, 0.9, 'S'], ['14:07', 36, 0.2, 'S'], ['14:07', 36, 2.3, 'S'], ['14:07', 37, 0.2, 'B'],
    ['14:08', 36, 0.5, 'S'], ['14:08', 36, 0.4, 'S'], ['14:08', 36, 0.2, 'S'], ['14:08', 36, 0.1, 'S']
];
document.getElementById('ticks').innerHTML = ticks.map(([t, p, v, side, n]) => `<tr>
    <td>${t}</td><td class="${p === 37 ? 'white' : 'green'}">10.${p}</td>
    <td class="olive">${v.toFixed(1)}<i>万</i></td>
    <td class="${side === 'B' ? 'red' : 'green'}">${side}</td><td class="gray">${n || ''}</td></tr>`).join('');

drawPrice();
drawSignal();
drawMacd();
drawDates();
```
